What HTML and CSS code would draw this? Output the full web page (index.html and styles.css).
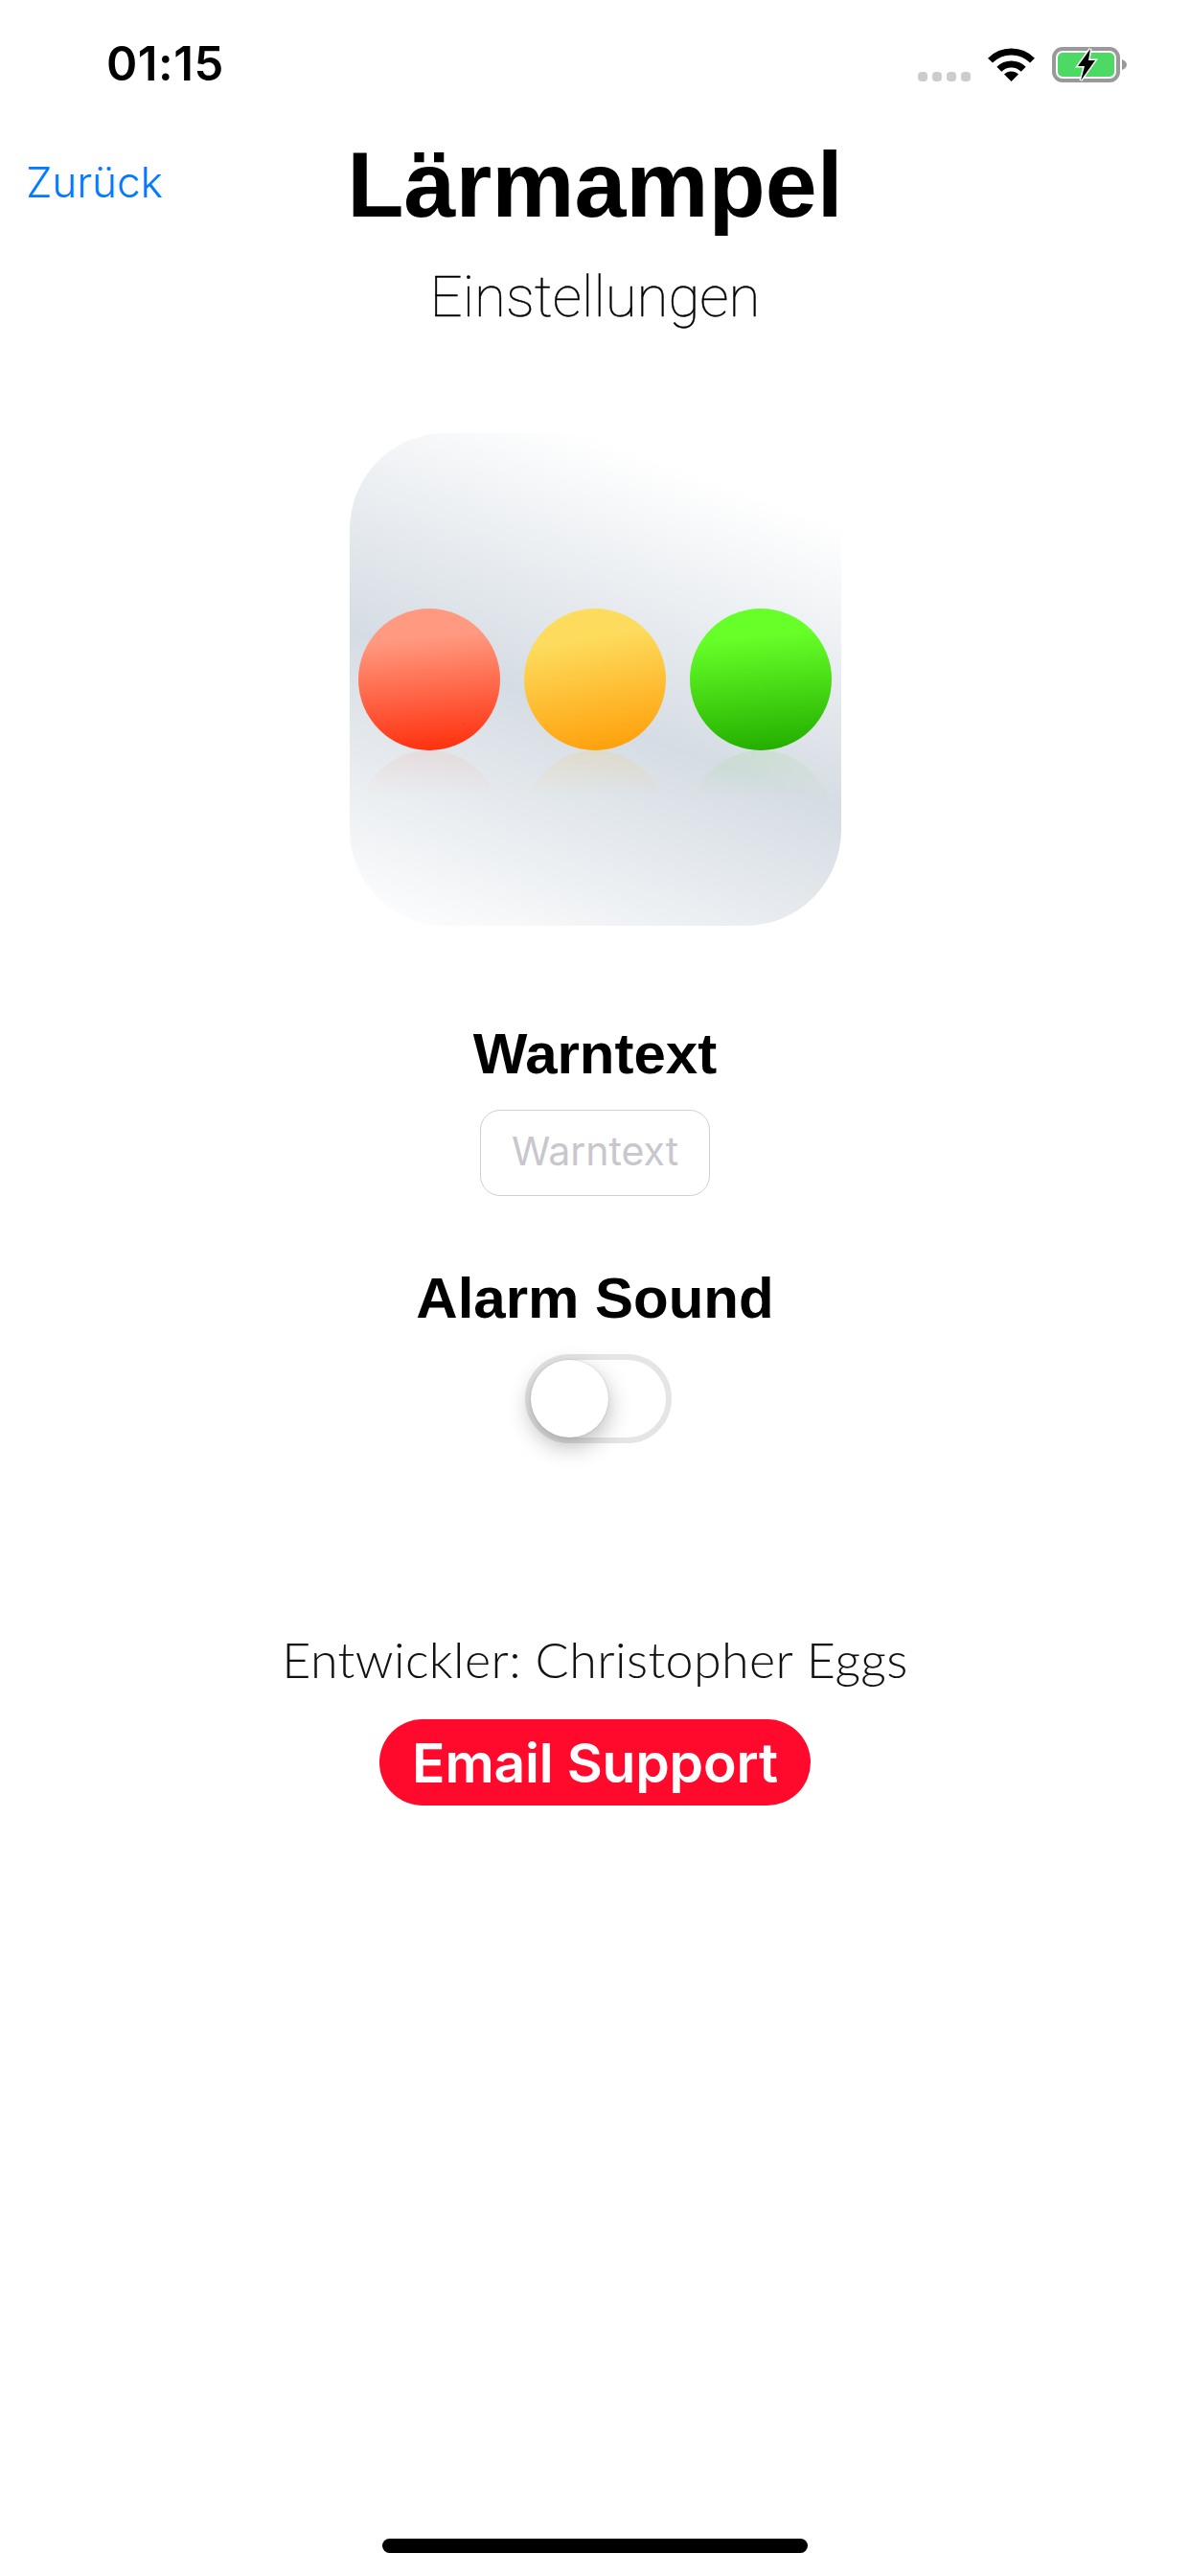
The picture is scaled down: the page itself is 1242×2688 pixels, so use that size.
FILE: index.html

```html
<!DOCTYPE html>
<html lang="de">
<head>
  <meta charset="UTF-8" />
  <meta name="viewport" content="width=device-width, initial-scale=1.0"/>
  <title>Lärmampel</title>
  <link rel="stylesheet" href="styles.css">
</head>
<body>
  <div class="page">
    <div class="status">
      <span class="time">01:15</span>
      <div class="status-icons">
        <div class="signal"><i></i><i></i><i></i><i></i></div>
        <svg class="wifi" width="49" height="35" viewBox="0 0 49 35">
          <path d="M2.5 13.1A31 31 0 0 1 46.5 13.1" fill="none" stroke="#000" stroke-width="7"/>
          <path d="M11.8 22.3A18 18 0 0 1 37.2 22.3" fill="none" stroke="#000" stroke-width="7"/>
          <path d="M24.5 35L17 27.5A10.6 10.6 0 0 1 32 27.5Z" fill="#000"/>
        </svg>
        <svg class="battery" width="79" height="37" viewBox="0 0 79 37">
          <rect x="2" y="2" width="67" height="33" rx="9" fill="#fff" stroke="#999" stroke-width="4"/>
          <path d="M73 13C76 14 78 16 78 18.500C78 21 76 23 73 24Z" fill="#999"/>
          <rect x="6" y="6" width="59" height="25" rx="5" fill="#4cd964"/>
          <polygon points="40,2 27,20 34,20 30,35 45,14 38,14" fill="#000" stroke="#fff" stroke-width="3" paint-order="stroke"/>
        </svg>
      </div>
    </div>

    <div class="nav">
      <a class="back">Zurück</a>
      <h1>Lärmampel</h1>
    </div>
    <div class="subtitle">Einstellungen</div>

    <div class="app-icon">
      <div class="lamp"><div class="dot red"></div><div class="glow red-glow"></div></div>
      <div class="lamp"><div class="dot yellow"></div><div class="glow yellow-glow"></div></div>
      <div class="lamp"><div class="dot green"></div><div class="glow green-glow"></div></div>
    </div>

    <h2 class="label warn-label">Warntext</h2>
    <div class="field">Warntext</div>

    <h2 class="label alarm-label">Alarm Sound</h2>
    <div class="switch"><div class="knob"></div></div>

    <div class="dev">Entwickler: Christopher Eggs</div>
    <button class="support">Email Support</button>

    <div class="home-bar"></div>
  </div>
</body>
</html>
```

FILE: styles.css

```css
body {
  margin: 0;
  padding: 0;
  background: #fff;
  color: #000;
  font-family: "Liberation Sans", Arial, sans-serif;
}
.page {
  display: flex;
  flex-direction: column;
  align-items: center;
  height: 2688px;
  box-sizing: border-box;
  padding-bottom: 24px;
  overflow: hidden;
}

/* status bar */
.status {
  width: 100%;
  height: 100px;
  box-sizing: border-box;
  padding: 49px 65px 0 111px;
  display: flex;
  justify-content: space-between;
  align-items: flex-start;
}
.time {
  font-family: Inter, sans-serif;
  font-weight: 600;
  font-size: 49px;
  letter-spacing: 0.5px;
  line-height: 36px;
}
.status-icons {
  display: flex;
  align-items: flex-end;
  height: 37px;
}
.signal {
  display: flex;
  gap: 5px;
  margin-right: 18px;
  margin-bottom: 1px;
}
.signal i {
  width: 10px;
  height: 10px;
  background: #ccc;
  border-radius: 4px;
}
.wifi {
  margin-right: 18px;
  margin-bottom: 1px;
}

/* header */
.nav {
  width: 100%;
  margin-top: 38px;
  display: grid;
  grid-template-columns: 1fr auto 1fr;
  align-items: start;
}
.back {
  color: #007aff;
  font-family: Inter, sans-serif;
  font-weight: 300;
  font-size: 44px;
  line-height: 54px;
  padding: 25px 0 0 27px;
}
h1 {
  margin: 0;
  font-size: 97px;
  line-height: 110px;
  font-weight: 700;
}
.subtitle {
  margin-top: 22px;
  font-family: Roboto, sans-serif;
  font-weight: 100;
  font-size: 60px;
  -webkit-text-stroke: 0.4px #000;
  line-height: 80px;
}

/* app icon */
.app-icon {
  margin-top: 102px;
  width: 513px;
  height: 514px;
  border-radius: 100px;
  background: linear-gradient(200deg, #fff 14%, #d5dce3 56%, #fff 100%);
  display: flex;
  justify-content: center;
  gap: 25px;
  padding-top: 183px;
  box-sizing: border-box;
}
.lamp {
  width: 148px;
}
.dot {
  width: 148px;
  height: 148px;
  border-radius: 50%;
}
.glow {
  width: 148px;
  height: 148px;
  border-radius: 50%;
}
.red { background: linear-gradient(175deg, #ff9a80 22%, #ff3210 95%); }
.yellow { background: linear-gradient(170deg, #fddb5c 25%, #ff9f0a 95%); }
.green { background: linear-gradient(175deg, #66ff28 22%, #25b000 95%); }
.red-glow { background: linear-gradient(180deg, rgba(255, 120, 90, 0.1), rgba(255, 120, 90, 0) 33%); }
.yellow-glow { background: linear-gradient(180deg, rgba(255, 190, 60, 0.16), rgba(255, 190, 60, 0) 33%); }
.green-glow { background: linear-gradient(180deg, rgba(90, 210, 40, 0.1), rgba(90, 210, 40, 0) 33%); }

/* form */
.label {
  margin: 0;
  font-size: 60px;
  line-height: 70px;
  font-weight: 700;
}
.warn-label {
  margin-top: 99px;
}
.alarm-label {
  margin-top: 72px;
}
.field {
  margin-top: 23px;
  width: 240px;
  height: 90px;
  box-sizing: border-box;
  border: 1.5px solid #d0d0d0;
  border-radius: 21px;
  color: #c7c7cd;
  font-family: Inter, sans-serif;
  font-size: 41px;
  line-height: 85px;
  text-align: center;
}
.switch {
  margin-top: 23px;
  margin-left: 7px;
  width: 153px;
  height: 93px;
  box-sizing: border-box;
  border: 6px solid #e5e5e5;
  border-radius: 47px;
}
.knob {
  width: 81px;
  height: 81px;
  border-radius: 50%;
  background: #fff;
  box-shadow: 0 9px 24px rgba(0, 0, 0, 0.28), 0 0 2px rgba(0, 0, 0, 0.2);
}

/* footer */
.dev {
  margin-top: 195px;
  font-family: Lato, sans-serif;
  font-weight: 300;
  font-size: 52px;
  letter-spacing: 0.4px;
  line-height: 60px;
  color: #111;
}
.support {
  margin-top: 33px;
  width: 450px;
  height: 90px;
  border: none;
  border-radius: 45px;
  background: #ff0a2d;
  color: #fff;
  font-family: Inter, sans-serif;
  font-weight: 600;
  font-size: 57px;
  letter-spacing: -0.2px;
  padding: 0;
}
.home-bar {
  margin-top: auto;
  width: 444px;
  height: 15px;
  background: #000;
  border-radius: 8px;
}
```
